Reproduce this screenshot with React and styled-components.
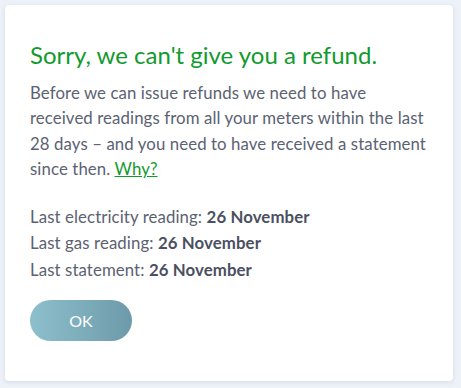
import styled, { createGlobalStyle } from "styled-components";

const GlobalStyle = createGlobalStyle`
  body {
    margin: 0;
    background: #edf1f8;
    font-family: Lato, "Open Sans", sans-serif;
  }
`;

const Page = styled.div`
  padding: 5px 8px 8px 5px;
`;

const Card = styled.div`
  background: #fff;
  border-radius: 4px;
  box-shadow: 0 1px 4px rgba(140, 160, 200, 0.25);
  padding: 35px 15px 40px 25px;
`;

const Title = styled.h2`
  margin: 0 0 10px;
  color: #119a2e;
  font-weight: 400;
  font-size: 24px;
  line-height: 30px;
`;

const Text = styled.p`
  max-width: 400px;
  margin: 0 0 22px;
  color: #5b6272;
  font-size: 16.8px;
  letter-spacing: 0.1px;
  line-height: 25.4px;
`;

const Why = styled.a`
  color: #119a2e;
  text-decoration: underline;
`;

const Readings = styled.div`
  margin-bottom: 17px;
`;

const Reading = styled.div`
  color: #5b6272;
  font-size: 16.8px;
  letter-spacing: 0.1px;
  line-height: 26.5px;

  b {
    color: #4a5061;
    font-weight: 700;
  }
`;

const OkButton = styled.button`
  display: block;
  width: 102px;
  height: 41px;
  border: none;
  border-radius: 21px;
  background: linear-gradient(90deg, #8ebfcc 0%, #6d9aaa 100%);
  color: #fff;
  font-family: Lato, sans-serif;
  font-size: 16px;
  cursor: pointer;
`;

const readings = [
  ["Last electricity reading", "26 November"],
  ["Last gas reading", "26 November"],
  ["Last statement", "26 November"],
];

export default function App() {
  return (
    <>
      <GlobalStyle />
      <Page>
        <Card>
          <Title>Sorry, we can't give you a refund.</Title>
          <Text>
            Before we can issue refunds we need to have received readings from
            all your meters within the last 28 days – and you need to have
            received a statement since then. <Why href="#">Why?</Why>
          </Text>
          <Readings>
            {readings.map(([label, date]) => (
              <Reading key={label}>
                {label}: <b>{date}</b>
              </Reading>
            ))}
          </Readings>
          <OkButton>OK</OkButton>
        </Card>
      </Page>
    </>
  );
}
